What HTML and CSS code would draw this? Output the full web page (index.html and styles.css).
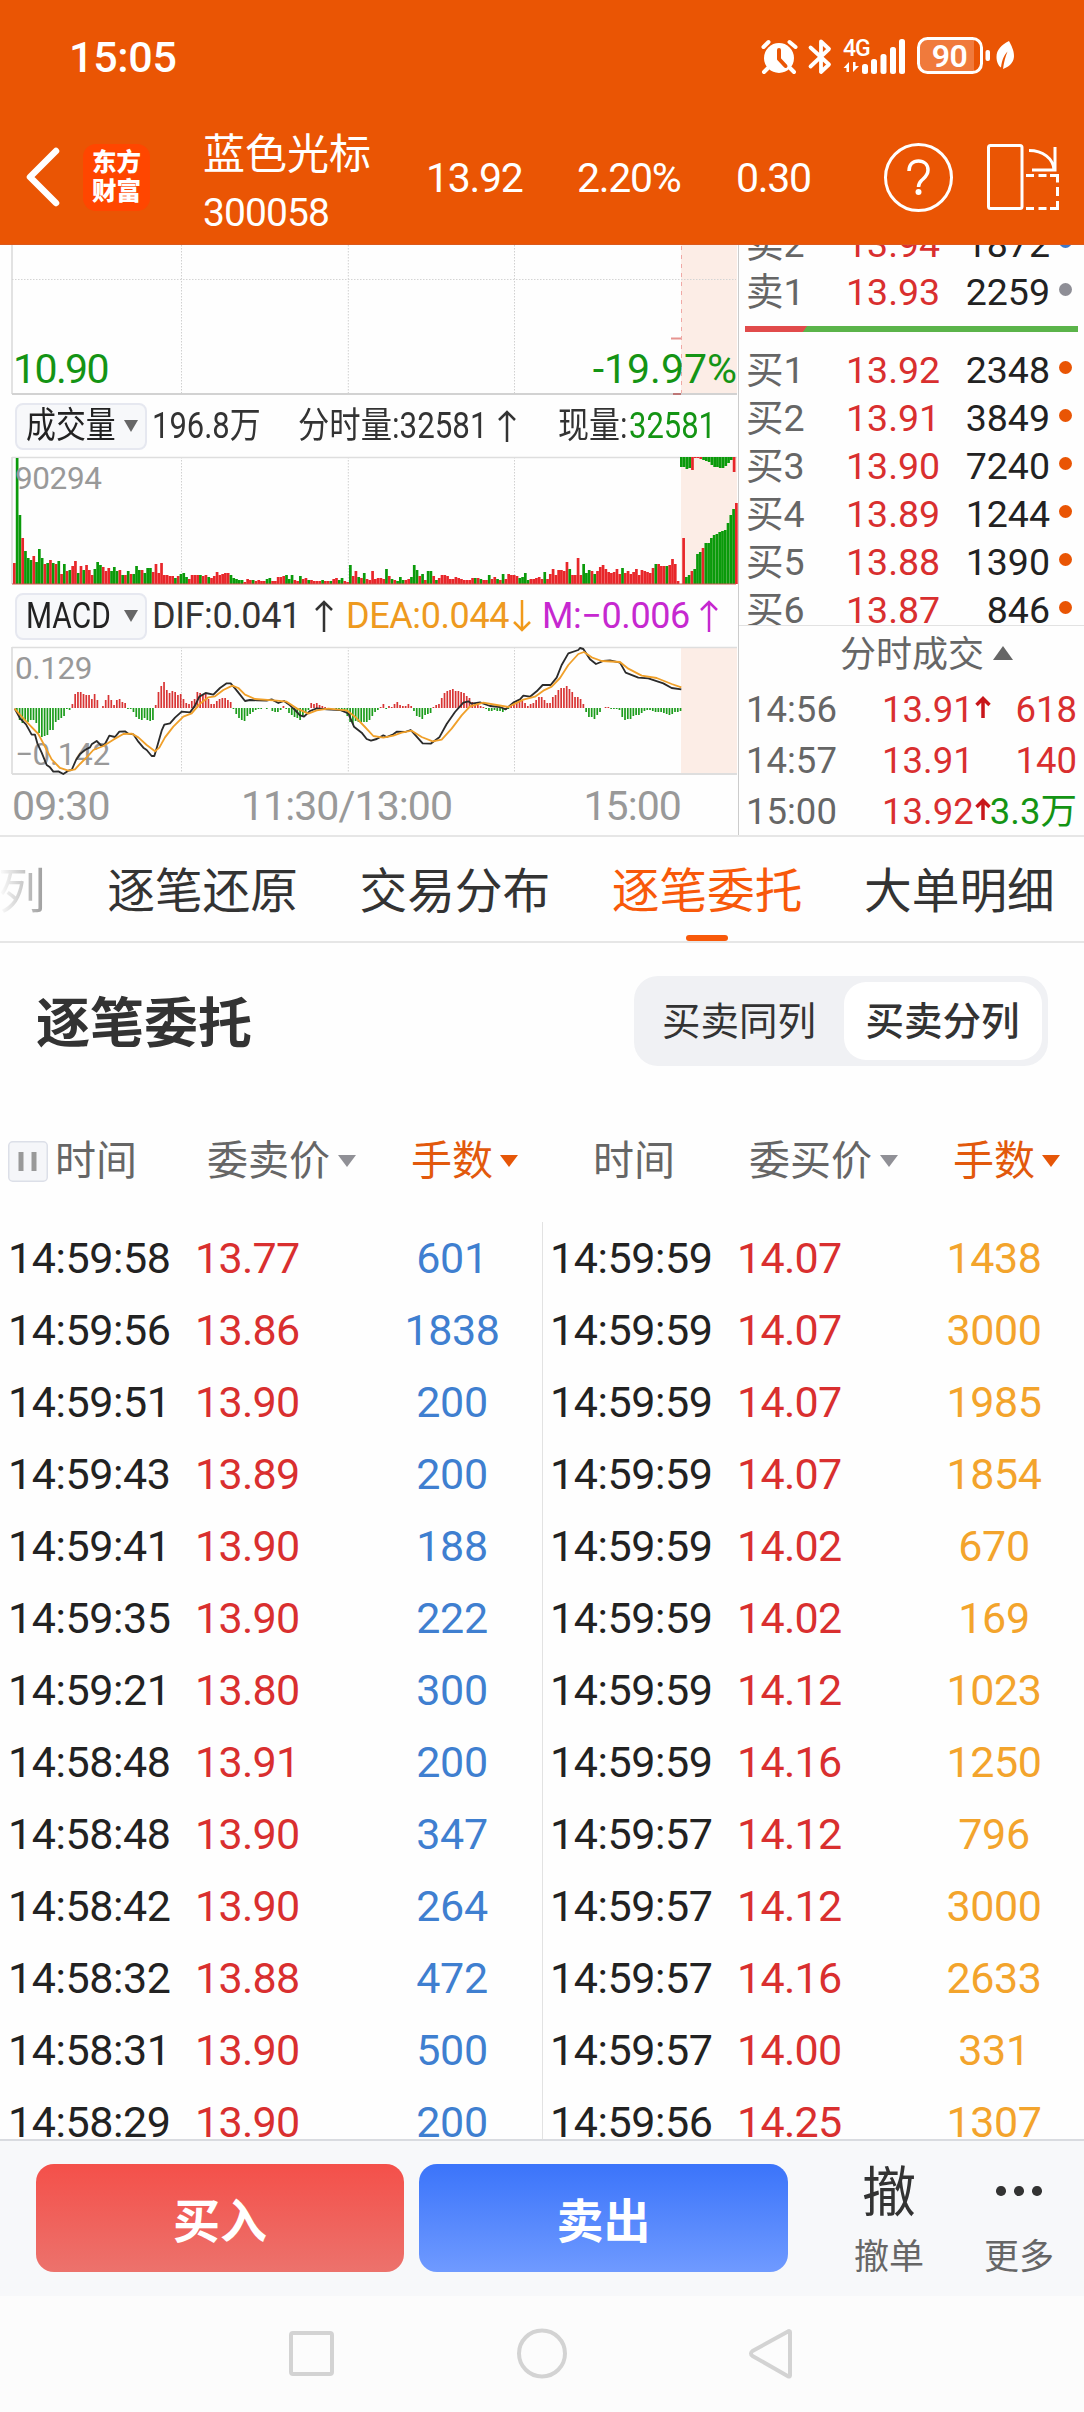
FILE: index.html
```html
<!DOCTYPE html>
<html lang="zh-CN">
<head>
<meta charset="utf-8">
<title>蓝色光标 300058</title>
<link rel="stylesheet" href="styles.css">
</head>
<body>
<header class="top">
  <div class="status">
    <span class="clock">15:05</span>
    <svg class="status-icons" width="256" height="44" viewBox="760 34 256 44">
      <g fill="#fff" stroke="none">
        <circle cx="779" cy="58" r="15"/>
        <path d="M768 68l-4 4M790 68l4 4M763.5 47l5-5M789.5 42l6 5" stroke="#fff" stroke-width="4" stroke-linecap="round"/>
        <path d="M779 50v9l6.500 7" fill="none" stroke="#ea5504" stroke-width="4" stroke-linecap="round" stroke-linejoin="round"/>
        <path d="M810.500 47.500L829 64.500 821 72V41.500l8 7.500-18.500 17.500" fill="none" stroke="#fff" stroke-width="3.800" stroke-linecap="round" stroke-linejoin="round"/>
        <text x="843" y="55.500" class="net">4G</text>
        <path d="M849 72V62l-5.500 6h3v4zM853 62v10l6-6h-3.500v-4z"/>
        <rect x="862" y="64" width="6" height="10" rx="2.500"/>
        <rect x="871" y="59" width="6" height="15" rx="2.500"/>
        <rect x="880.500" y="54" width="6" height="20" rx="2.500"/>
        <rect x="890" y="47" width="6" height="27" rx="2.500"/>
        <rect x="899" y="39" width="6" height="35" rx="2.500"/>
        <path d="M926 39h48v33h-48a6 6 0 0 1-6-6V45a6 6 0 0 1 6-6z" fill="#f07a3c"/>
        <rect x="918.500" y="38.500" width="63" height="34" rx="9" fill="none" stroke="#fff" stroke-width="3"/>
        <rect x="985.500" y="50" width="4.500" height="11" rx="2"/>
        <text x="949.500" y="67" text-anchor="middle" class="batt">90</text>
        <path d="M1009 41c-8 4-12.500 9-12.500 16 0 5 2 9 4.500 10.500 1-8 3-12 6.500-16-2 5-3.500 10-4.500 17.500 8-3 11-8 11-13 0-6-2.500-10-5-15z"/>
      </g>
    </svg>
  </div>
  <div class="bar">
    <svg class="back" width="36" height="62" viewBox="0 0 36 62"><path d="M31 5L5 31l26 26" fill="none" stroke="#fff" stroke-width="6.500" stroke-linecap="round" stroke-linejoin="round"/></svg>
    <div class="logo"><span>东方</span><span>财富</span></div>
    <div class="name"><span class="cn">蓝色光标</span><span class="code">300058</span></div>
    <span class="q q1">13.92</span>
    <span class="q q2">2.20%</span>
    <span class="q q3">0.30</span>
    <svg class="tools" width="180" height="72" viewBox="882 141 180 72" fill="none" stroke="#fff" stroke-width="3">
      <circle cx="917.500" cy="177.500" r="33"/>
      <path d="M908 171c0-6.500 4-10 9.500-10s9.500 3.500 9.500 9-3.500 7.500-6.500 10.500c-2.500 2.500-3 4-3 6.500" stroke-width="3.500"/>
      <circle cx="917.500" cy="192" r="3" fill="#fff" stroke="none"/>
      <rect x="987.500" y="145.500" width="33.500" height="63" rx="2"/>
      <path d="M1028 150.500c14 0 24 8 25 19M1054 147v22.500M1031 170h24.500"/>
      <path d="M1025 175.500h8M1037.500 175.500h8M1049 175.500h7.500v7M1056.500 187v9M1056.500 201v7.500h-7.500M1045.500 208.500h-8M1033 208.500h-8"/>
    </svg>
  </div>
</header>

<section class="quote">
  <div class="charts">
    <div class="chart price">
      <svg width="738" height="151" viewBox="0 245 738 151" id="price"></svg>
      <span class="lab low">10.90</span><span class="lab pct">-19.97%</span>
    </div>
    <div class="ind">
      <span class="chip"><b class="sq">成交量</b><i></i></span>
      <span class="sq a1">196.8万</span>
      <span class="sq a2">分时量:32581</span>
      <svg class="ar a3" width="20" height="34"><path d="M10 33V3M2 11l8-8 8 8"/></svg>
      <span class="sq a4">现量:</span>
      <span class="sq a5 green">32581</span>
    </div>
    <div class="chart vol">
      <svg width="738" height="130" viewBox="0 456 738 130" id="vol"></svg>
      <span class="lab small">90294</span>
    </div>
    <div class="ind">
      <span class="chip"><b class="sq">MACD</b><i></i></span>
      <span class="m1">DIF:0.041</span>
      <svg class="ar" width="20" height="34"><path d="M10 33V3M2 11l8-8 8 8"/></svg>
      <span class="m2">DEA:0.044</span>
      <svg class="ar orange" width="20" height="34"><path d="M10 1v30M2 23l8 8 8-8"/></svg>
      <span class="m3">M:−0.006</span>
      <svg class="ar purple" width="20" height="34"><path d="M10 33V3M2 11l8-8 8 8"/></svg>
    </div>
    <div class="chart macd">
      <span class="lab small">0.129</span><span class="lab small bottom">−0.142</span>
      <svg width="738" height="130" viewBox="0 646 738 130" id="macd"></svg>
    </div>
    <div class="axis"><span>09:30</span><span>11:30/13:00</span><span>15:00</span></div>
  </div>
  <aside class="book">
    <div class="levels">
      <div class="lv"><span>卖2</span><b>13.94</b><em>1872</em><i class="blue"></i></div>
      <div class="lv"><span>卖1</span><b>13.93</b><em>2259</em><i class="gray"></i></div>
      <div class="ratio"></div>
      <div class="lv"><span>买1</span><b>13.92</b><em>2348</em><i></i></div>
      <div class="lv"><span>买2</span><b>13.91</b><em>3849</em><i></i></div>
      <div class="lv"><span>买3</span><b>13.90</b><em>7240</em><i></i></div>
      <div class="lv"><span>买4</span><b>13.89</b><em>1244</em><i></i></div>
      <div class="lv"><span>买5</span><b>13.88</b><em>1390</em><i></i></div>
      <div class="lv"><span>买6</span><b>13.87</b><em>846</em><i></i></div>
    </div>
    <div class="deal-title">分时成交<i></i></div>
    <div class="deal"><span>14:56</span><b>13.91</b><svg width="16" height="22"><path d="M8 22V3M1.500 9L8 2.500 14.500 9"/></svg><em>618</em></div>
    <div class="deal"><span>14:57</span><b>13.91</b><s></s><em>140</em></div>
    <div class="deal"><span>15:00</span><b>13.92</b><svg width="16" height="22"><path d="M8 22V3M1.500 9L8 2.500 14.500 9"/></svg><em class="green">3.3万</em></div>
  </aside>
</section>

<nav class="tabs">
  <span class="cut">列</span><span>逐笔还原</span><span>交易分布</span><span class="on">逐笔委托</span><span>大单明细</span>
</nav>

<section class="title-row">
  <h1>逐笔委托</h1>
  <div class="toggle"><span>买卖同列</span><span class="on">买卖分列</span></div>
</section>

<div class="thead">
  <div class="half"><svg class="pause" width="40" height="41"><rect x=".75" y=".75" width="38.500" height="39.500" rx="4"/><path d="M13 11v19M26 11v19"/></svg><span class="t">时间</span><span class="p">委卖价<i></i></span><span class="n">手数<i></i></span></div>
  <div class="half"><span class="t t2">时间</span><span class="p">委买价<i></i></span><span class="n">手数<i></i></span></div>
</div>
<div class="tbody">
  <div class="list sell" id="sell"></div>
  <div class="list buy" id="buy"></div>
</div>

<footer class="actions">
  <button class="btn b-buy">买入</button>
  <button class="btn b-sell">卖出</button>
  <div class="act cancel"><b>撤</b><span>撤单</span></div>
  <div class="act more"><b><i></i><i></i><i></i></b><span>更多</span></div>
</footer>
<div class="sysnav">
  <svg width="504" height="54" viewBox="289 2326 504 54" fill="none" stroke="#d3d3d3" stroke-width="4">
    <rect x="291" y="2333" width="41" height="41" rx="2"/>
    <circle cx="542" cy="2353.500" r="23"/>
    <path d="M790 2332v43.500c0 1-1 1.500-2 .7L752.500 2356c-2-1.500-2-3.500 0-5L788 2331.500c1-.7 2-.4 2 .5z" stroke-linejoin="round"/>
  </svg>
</div>
<script src="app.js"></script>
</body>
</html>
```
FILE: styles.css
```css
* { box-sizing: border-box; }
body {
  margin: 0;
  width: 1084px;
  height: 2412px;
  overflow: hidden;
  display: flex;
  flex-direction: column;
  background: #fefefe;
  color: #222;
  font-family: Roboto, "Noto Sans CJK SC", sans-serif;
}
b, em, i, s { font-weight: 400; font-style: normal; text-decoration: none; }
.green { color: #149414 !important; }

.top { height: 245px; background: #ea5504; color: #fff; border-bottom: 1px solid #dc5a1c; flex: none; }
.status { display: flex; justify-content: space-between; height: 110px; padding: 34px 68px 0 69px; }
.clock { font-size: 43px; font-weight: 500; line-height: 46px; letter-spacing: -.3px; }
.status-icons { display: block; }
.net { font: 500 23px Roboto, sans-serif; letter-spacing: -1px; }
.batt { font: 600 32px Roboto, sans-serif; letter-spacing: -.5px; }
.bar { display: flex; align-items: center; height: 134px; padding-left: 25px; }
.back { flex: none; }
.logo {
  width: 67px; height: 67px; margin-left: 22px; border-radius: 13px; background: #ff4600;
  display: flex; flex-direction: column; align-items: center; justify-content: center;
  font-size: 24.500px; font-weight: 900; line-height: 29px;
}
.name { width: 222px; padding: 12px 0 0 53px; display: flex; flex-direction: column; }
.cn { font-size: 42px; line-height: 60px; white-space: nowrap; }
.code { font-size: 39px; line-height: 56px; letter-spacing: -.9px; }
.q { font-size: 41px; letter-spacing: -1.300px; line-height: 48px; padding-top: 2px; }
.q1 { width: 151px; margin-left: 54px; }
.q2 { width: 159px; }
.q3 { width: 147px; }

.quote { display: flex; height: 592px; border-bottom: 2px solid #e6e6e6; flex: none; }
.charts { width: 738px; flex: none; display: flex; flex-direction: column; }
.chart { position: relative; flex: none; }
.chart svg { display: block; position: relative; }
.price { height: 151px; }
.vol, .macd { height: 130px; }
.lab { position: absolute; color: #149414; font-size: 41px; line-height: 48px; letter-spacing: -1.600px; }
.low { left: 13px; top: 100px; }
.pct { right: 1px; top: 100px; letter-spacing: 0; }
.small { left: 15px; top: 4px; color: #999; font-size: 31.500px; line-height: 38px; letter-spacing: -.4px; }
.macd .small { top: 4px; }
.macd .small.bottom { top: 90px; }
.ind { height: 60px; display: flex; align-items: center; padding-left: 15px; font-size: 36px; line-height: 50px; white-space: nowrap; color: #333; flex: none; }
.chip {
  width: 132px; height: 47px; margin-right: 5px; padding: 0 7px 0 9px; border: 2px solid #e6e8f0; border-radius: 8px;
  background: #f7f8fa; display: flex; align-items: center; justify-content: space-between; flex: none; color: #222;
}
.chip .sq { width: 88px; line-height: 43px; }
.chip i { border: 7.500px solid transparent; border-top: 12px solid #666; border-bottom: 0; }
.sq { display: block; transform: scaleX(.86); transform-origin: 0 50%; flex: none; }
.chip .sq { transform: scaleX(.83); }
.a1 { width: 146px; }
.a2 { width: 199px; transform: scaleX(.87); }
.a3 { margin-right: 41px; }
.a4 { width: 71px; }
.ar { fill: none; stroke: #333; stroke-width: 2.500; flex: none; }
.orange { stroke: #f19a1b; }
.purple { stroke: #c628d0; }
.m1, .m2, .m3 { letter-spacing: -.4px; flex: none; }
.m1 { width: 162px; }
.m2 { width: 166px; margin-left: 12px; color: #ee9a20; }
.m3 { width: 157px; margin-left: 10px; color: #c628d0; }
.axis { display: flex; height: 60px; padding: 5px 57px 0 12px; justify-content: space-between; font-size: 41px; line-height: 50px; color: #999; letter-spacing: -.9px; }

.book { flex: 1; border-left: 1.500px solid #ccc; display: flex; flex-direction: column; }
.levels { height: 381px; flex: none; overflow: hidden; border-bottom: 1.500px solid #e2e2e2; }
.lv { display: grid; grid-template-columns: 100px 114px 90px 24px; height: 48px; line-height: 48px; padding-left: 7px; font-size: 37.500px; }
.lv:first-child { margin-top: -25px; }
.lv span { color: #666; }
.lv b { color: #d92f2f; }
.lv em { text-align: right; }
.lv i { width: 13px; height: 13px; border-radius: 50%; background: #e95504; margin: 15px 0 0 9px; }
.lv i.gray { background: #8e8e96; }
.lv i.blue { background: #3f78c8; }
.ratio { height: 6px; margin: 10px 6px 14px 6px; background: linear-gradient(125deg, #e14b4b 0 18.300%, #5bb44a 18.500%); }
.deal-title { height: 58px; flex: none; display: flex; justify-content: center; align-items: center; gap: 9px; padding-left: 30px; color: #666; font-size: 36px; line-height: 50px; }
.deal-title i { border: 10.500px solid transparent; border-bottom: 14px solid #666; border-top: 0; margin-top: -4px; }
.deal { height: 51px; flex: none; line-height: 51px; display: grid; grid-template-columns: 136px 93px 16px 1fr; padding: 0 7px 0 7px; font-size: 36.500px; color: #d92f2f; }
.deal span { color: #666; }
.deal svg { fill: none; stroke: #c8161a; stroke-width: 3.500; margin-top: 12px; }
.deal em { text-align: right; white-space: nowrap; margin-left: -6px; }

.tabs { height: 106px; flex: none; display: flex; gap: 61.500px; margin-left: -2px; border-bottom: 2px solid #e6e6e6; font-size: 47.700px; line-height: 110px; color: #333; }
.tabs span { position: relative; height: 104px; white-space: nowrap; }
.tabs .cut { background: linear-gradient(90deg, #fff, #999); -webkit-background-clip: text; color: transparent; }
.tabs .on { color: #f8590a; }
.tabs .on::after { content: ""; position: absolute; left: 74px; bottom: 0; width: 42px; height: 6px; border-radius: 3px; background: #f8590a; }

.title-row { height: 176px; flex: none; display: flex; justify-content: space-between; align-items: flex-start; padding: 33px 36px 0; }
.title-row h1 { margin: 0; font-size: 54px; line-height: 97px; font-weight: 700; color: #333; }
.toggle { display: flex; width: 414px; height: 90px; padding: 6px; border-radius: 24px; background: #f0f1f4; font-size: 38.500px; line-height: 80px; color: #333; }
.toggle span { width: 204px; padding-right: 6px; text-align: center; }
.toggle .on { width: 198px; height: 78px; padding-right: 1px; background: #fff; border-radius: 22px; font-weight: 500; }

.thead { height: 84px; flex: none; display: flex; }
.half { width: 542px; height: 84px; display: flex; align-items: center; padding: 0 0 0 8px; font-size: 41px; line-height: 60px; color: #666; white-space: nowrap; }
.pause { fill: #f5f6f9; stroke: #dcdfe8; stroke-width: 1.500; margin-right: 7px; }
.pause path { stroke: #999; stroke-width: 5; }
.t { width: 152px; }
.t2 { width: 155px; margin-left: 43px; }
.p { width: 204px; display: flex; align-items: center; gap: 8px; }
.half + .half .p { margin-left: 2px; }
.half + .half .t2 { width: 154px; }
.n { color: #e2590c; display: flex; align-items: center; gap: 7px; }
.half i { border: 9px solid transparent; border-top: 12px solid #909096; border-bottom: 0; }
.half .n i { border-top-color: #e65608; }

.tbody { flex: 1; min-height: 0; display: flex; overflow: hidden; margin-top: 19px; }
.list { width: 542px; flex: none; }
.buy { border-left: 1px solid #e2e2e2; }
.row { display: grid; grid-template-columns: 187px 154px 206px; height: 72px; line-height: 72px; font-size: 43px; padding-left: 8px; letter-spacing: -.4px; }
.buy .row { padding-left: 7px; }
.row b { color: #d92f2f; letter-spacing: -.7px; }
.row em { text-align: center; color: #3f7fd0; }
.buy .row em { color: #f3a42c; }

.actions { height: 157px; flex: none; background: #f7f8fa; border-top: 2px solid #d9dbe0; display: flex; padding: 23px 0 0 36px; }
.btn { border: 0; padding: 0; height: 108px; width: 368px; border-radius: 18px; color: #fff; font: 700 47px/106px "Noto Sans CJK SC", sans-serif; }
.b-buy { background: linear-gradient(#f4504a, #ec726c); }
.b-sell { width: 369px; margin-left: 15px; background: linear-gradient(#3b74fa, #6f9aff); }
.act { width: 72px; display: flex; flex-direction: column; align-items: center; font-size: 35px; color: #666; white-space: nowrap; }
.act b { height: 56px; line-height: 59px; font-size: 54px; color: #333; display: flex; }
.act span { line-height: 76px; }
.cancel { margin-left: 65px; }
.more { margin-left: 58px; }
.more b { align-items: center; gap: 8.500px; padding-bottom: 2px; }
.more b i { width: 9.500px; height: 9.500px; border-radius: 50%; background: #333; }
.sysnav { height: 116px; flex: none; background: #fcfcfc; padding: 30px 0 0 289px; }
.sysnav svg { display: block; }
```
FILE: app.js
```js
const STEP = 2.777;
const RED = '#e8262a', GREEN = '#0a9a0a';
const el = id => document.getElementById(id);
const rect = (x, y, w, h, f) => `<rect x="${x.toFixed(2)}" y="${y}" width="${w}" height="${h}" fill="${f}"/>`;
const line = (x1, y1, x2, y2, c, w, d = '') => `<line x1="${x1}" y1="${y1}" x2="${x2}" y2="${y2}" stroke="${c}" stroke-width="${w}" stroke-dasharray="${d}"/>`;
const frame = (top, bottom) =>
  rect(681, top, 56, bottom - top, '#fcede6') +
  [181.5, 348.3, 514.5].map(x => line(x, top, x, bottom, '#d0d0d0', 1, '1.5 1.5')).join('') +
  line(12, top, 12, bottom, '#e2e2e2', 2);

// price chart
el('price').innerHTML = frame(245, 394) +
  line(12, 279.5, 736, 279.5, '#d4d4d4', 1, '1.5 1.5') +
  line(681.5, 246, 681.5, 394, '#f0a8a4', 1, '4 5') +
  line(671, 338.5, 681, 338.5, '#e79490', 2) +
  line(12, 394, 737, 394, '#d2d2d2', 2) + line(673, 394, 681, 394, '#bd7777', 2);

// volume per minute: colour + height
const vol = 'r21 g126 g69 r46 g33 g26 g24 r28 g22 g35 g26 r20 g21 r24 g21 r20 g23 r10 g20 r13 g14 r18 r23 g11 r18 g14 r19 r14 r9 g15 g22 g19 r17 r13 r16 g13 g17 g13 r14 g9 r9 g13 r10 g10 g18 g14 r14 g11 g16 g16 r12 r20 r11 r21 r9 r9 r8 r8 g6 r8 g10 g11 g7 r5 r9 r9 r9 g9 r8 r9 g7 r6 r8 r12 r9 r10 r11 r11 g9 g6 g5 g4 g4 r2 r5 r4 g4 r3 r4 r3 r3 g5 g6 r3 r3 r7 r7 r8 g9 g5 g9 r4 r3 g8 r5 r6 g4 r4 r3 r3 r3 g4 r3 r3 g3 r5 r6 g4 g6 r3 r2 g19 r8 r13 g7 r6 g11 r5 r4 r13 r5 r6 r6 r5 g15 r8 g5 r4 g3 g7 g4 r4 r5 g7 g19 g14 r8 g10 r4 g13 g13 r8 g4 r6 r9 r9 r8 r5 r5 r7 r6 r5 r4 r4 r4 r6 g6 r6 g5 r4 r4 g9 r5 r7 g5 r4 g10 r5 r10 r9 r9 r8 g6 g7 g11 g4 r5 r5 r6 r7 r5 g12 r5 r10 r15 r9 r14 r14 r13 r22 g15 r9 r9 r26 r9 g20 g11 g14 r13 g10 r13 r17 r19 r15 r12 r11 r12 r15 r10 g16 r11 r13 r10 r12 r15 r9 r14 r13 r12 r11 r16 g20 r20 r18 r18 g18 r19 r25 r20 r3 r0 r46 g7 g9 r13 g15 g30 g32 r36 g41 g41 g46 g49 g50 g52 g53 g54 g61 g69 g75 r81'.split(' ');
const unmatched = 'g10 g10 g12 g11 r13 r1 r1 r2 g3 g4 g5 g8 g10 g10 g11 g11 g9 g6 g3 r15'.split(' ');
const bars = (list, x0, up) => list.map((v, i) => {
  const h = +v.slice(1);
  return rect(x0 + i * STEP, up ? 584 - h : 457, 2.7, h, v[0] === 'r' ? RED : GREEN);
}).join('');
el('vol').innerHTML = frame(457, 584) + line(12, 457.5, 737, 457.5, '#dedede', 1.5) +
  bars(vol, 13, true) + bars(unmatched, 680, false) + line(12, 584, 736, 584, '#c8564e', 1);

// MACD histogram, one value per minute, and the two averages
const hist = [-3,-12,-15,-12,-14,-12,-12,-15,-25,-29,-28,-27,-22,-22,-14,-12,-10,-8,-1,-2,4,14,16,16,14,13,13,9,14,8,0,2,8,13,8,3,8,9,6,5,-1,-1,-4,-9,-11,-12,-10,-12,-13,-12,3,16,22,26,18,15,17,16,13,14,9,5,4,7,9,16,15,14,14,9,4,4,7,9,10,10,8,6,-1,-6,-10,-12,-13,-8,-6,-4,-2,-1,-1,0,-1,0,-3,-4,-4,-2,2,-1,-5,-7,-9,-10,-12,-8,-5,-2,5,4,5,3,2,1,0,0,0,-1,-1,-2,-3,-8,-14,-16,-13,-14,-14,-14,-14,-12,-8,-4,-2,1,4,-1,2,1,4,6,3,2,2,4,2,-3,-8,-9,-11,-7,-6,-5,1,3,4,10,15,17,18,19,17,17,16,15,12,10,6,5,5,2,1,-1,-3,-3,-2,-3,-3,-4,-2,-1,2,5,6,6,7,5,2,4,5,8,11,11,8,5,5,11,13,18,20,20,22,19,16,11,11,9,4,-4,-9,-9,-11,-7,-4,0,1,1,-1,-1,-1,-2,-9,-12,-11,-11,-8,-7,-7,-5,-3,-2,-2,-3,-4,-4,-4,-5,-6,-7,-6,-4,-4,-3];
const dif = '44,536 60,565 78,583 95,614 105,614 112,640 125,668 140,705 150,712 160,725 175,724 190,732 205,722 215,720 228,690 240,672 258,658 270,652 275,643 290,633 305,648 315,642 328,617 345,621 358,605 375,604 385,611 400,613 415,635 430,653 440,660 455,678 463,678 470,655 485,602 493,584 510,580 525,563 545,545 570,547 585,527 598,500 617,489 640,494 660,474 680,460 692,460 705,475 720,494 735,513 750,510 770,511 800,512 815,508 835,519 852,513 870,526 885,540 900,556 912,560 930,543 950,535 980,538 1020,540 1045,550 1062,590 1085,608 1100,627 1113,632 1130,627 1150,616 1160,621 1180,613 1190,605 1215,606 1232,600 1250,620 1268,640 1292,641 1318,622 1340,582 1365,546 1390,518 1405,514 1415,521 1440,517 1470,528 1500,531 1517,538 1540,518 1560,508 1570,497 1590,500 1610,484 1628,465 1652,465 1670,443 1685,405 1705,370 1735,360 1740,354 1750,357 1770,388 1788,402 1810,393 1830,391 1860,398 1877,428 1915,443 1945,445 1990,460 2015,474 2044,478';
const dea = '44,536 65,560 90,586 115,612 135,650 155,688 180,714 205,722 225,718 240,702 260,682 280,660 310,648 340,629 370,612 395,611 415,622 440,645 465,664 478,653 495,622 520,590 550,560 575,550 600,521 625,502 645,499 670,480 697,467 715,474 735,494 765,507 830,512 860,515 890,535 925,551 950,541 985,536 1040,541 1065,560 1095,591 1120,618 1150,623 1180,617 1205,608 1235,602 1265,621 1298,634 1325,629 1355,596 1385,556 1410,529 1450,518 1490,525 1525,531 1545,521 1570,509 1605,500 1630,482 1655,470 1680,444 1705,405 1735,372 1752,366 1775,382 1805,393 1860,396 1885,416 1925,437 1970,444 2015,462 2044,472';
el('macd').innerHTML = frame(647, 774) + line(12, 647.5, 737, 647.5, '#dedede', 1.5) +
  line(12, 774, 737, 774, '#dedede', 2) +
  hist.map((v, i) => rect(16 + i * STEP, v > 0 ? 708 - v : 708, 1.7, Math.abs(v), v > 0 ? '#d83434' : '#1c9c1c')).join('') +
  [[dif, '#2b2b2b'], [dea, '#f0a02a']].map(([p, c]) =>
    `<polyline transform="translate(0,530) scale(.33333)" points="${p}" fill="none" stroke="${c}" stroke-width="5.5" stroke-linejoin="round"/>`).join('');

// order lists
const sell = '14:59:58 13.77 601|14:59:56 13.86 1838|14:59:51 13.90 200|14:59:43 13.89 200|14:59:41 13.90 188|14:59:35 13.90 222|14:59:21 13.80 300|14:58:48 13.91 200|14:58:48 13.90 347|14:58:42 13.90 264|14:58:32 13.88 472|14:58:31 13.90 500|14:58:29 13.90 200';
const buy = '14:59:59 14.07 1438|14:59:59 14.07 3000|14:59:59 14.07 1985|14:59:59 14.07 1854|14:59:59 14.02 670|14:59:59 14.02 169|14:59:59 14.12 1023|14:59:59 14.16 1250|14:59:57 14.12 796|14:59:57 14.12 3000|14:59:57 14.16 2633|14:59:57 14.00 331|14:59:56 14.25 1307';
const rows = s => s.split('|').map(r => {
  const [t, p, n] = r.split(' ');
  return `<div class="row"><span>${t}</span><b>${p}</b><em>${n}</em></div>`;
}).join('');
el('sell').innerHTML = rows(sell);
el('buy').innerHTML = rows(buy);
```
